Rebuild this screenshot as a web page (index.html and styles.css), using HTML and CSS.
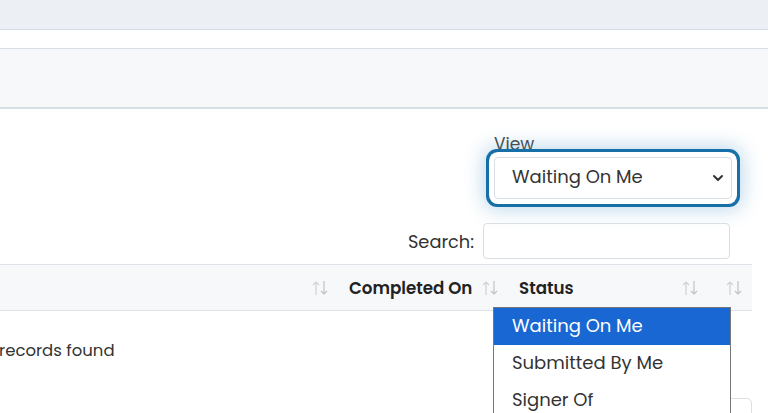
FILE: index.html
```html
<!DOCTYPE html>
<html lang="en">
<head>
<meta charset="utf-8">
<title>Documents</title>
<link rel="stylesheet" href="styles.css">
</head>
<body>
  <header class="topbar"></header>
  <div class="strip"></div>
  <div class="panel"></div>

  <main class="content">
    <div class="view-row">
      <div class="view-field">
        <label class="view-label">View</label>
        <div class="select focused">
          <span class="select-value">Waiting On Me</span>
          <svg class="chevron" width="12" height="8" viewBox="0 0 12 8"><path d="M2 2 L6 6 L10 2" fill="none" stroke="#333" stroke-width="2" stroke-linecap="round" stroke-linejoin="round"/></svg>
        </div>
      </div>
    </div>

    <div class="search-row">
      <label class="search-label">Search:</label>
      <div class="search-input"></div>
    </div>

    <div class="table">
      <div class="thead">
        <div class="th col-a"><span></span><svg class="sort" width="16" height="16" viewBox="0 0 16 16"><path d="M4 2 V15 M1 5 L4 2 L7 5" fill="none" stroke="#cfd2d6" stroke-width="1.2"/><path d="M12 1 V14 M9 11 L12 14 L15 11" fill="none" stroke="#bfc3c8" stroke-width="1.2"/></svg></div>
        <div class="th col-b"><span>Completed On</span><svg class="sort" width="16" height="16" viewBox="0 0 16 16"><path d="M4 2 V15 M1 5 L4 2 L7 5" fill="none" stroke="#cfd2d6" stroke-width="1.2"/><path d="M12 1 V14 M9 11 L12 14 L15 11" fill="none" stroke="#bfc3c8" stroke-width="1.2"/></svg></div>
        <div class="th col-c"><span>Status</span><svg class="sort" width="16" height="16" viewBox="0 0 16 16"><path d="M4 2 V15 M1 5 L4 2 L7 5" fill="none" stroke="#cfd2d6" stroke-width="1.2"/><path d="M12 1 V14 M9 11 L12 14 L15 11" fill="none" stroke="#bfc3c8" stroke-width="1.2"/></svg></div>
        <div class="th col-d"><span></span><svg class="sort" width="16" height="16" viewBox="0 0 16 16"><path d="M4 2 V15 M1 5 L4 2 L7 5" fill="none" stroke="#cfd2d6" stroke-width="1.2"/><path d="M12 1 V14 M9 11 L12 14 L15 11" fill="none" stroke="#bfc3c8" stroke-width="1.2"/></svg></div>
      </div>
      <div class="empty-row">records found</div>
    </div>

    <div class="pager">
      <div class="page-btn"></div>
    </div>

    <ul class="options">
      <li class="option selected">Waiting On Me</li>
      <li class="option">Submitted By Me</li>
      <li class="option">Signer Of</li>
    </ul>
  </main>
</body>
</html>
```
FILE: styles.css
```css
html, body {
  margin: 0;
  padding: 0;
  background: #fff;
  overflow: hidden;
}

body {
  width: 768px;
  height: 413px;
  font-family: "Poppins", "Open Sans", "Noto Sans", sans-serif;
  color: #333;
}

.topbar {
  height: 29px;
  background: #eceff4;
  border-bottom: 1px solid #d8dee6;
}

.strip {
  height: 18px;
  border-bottom: 1px solid #d8dee6;
}

.panel {
  height: 58px;
  background: #f7f8fa;
  border-bottom: 2px solid #d6dfe2;
}

.content {
  position: relative;
  height: 304px;
  overflow: hidden;
  padding-top: 22px;
  box-sizing: border-box;
}

/* view selector */
.view-row {
  display: flex;
  justify-content: flex-end;
  padding-right: 36px;
}

.view-field {
  display: flex;
  flex-direction: column;
  width: 238px;
}

.view-label {
  font-size: 17px;
  line-height: 26px;
  color: #4a4a4a;
}

.select {
  box-sizing: border-box;
  height: 42px;
  border: 1px solid #d8e0e6;
  border-radius: 4px;
  background: #fff;
  display: flex;
  align-items: center;
  justify-content: space-between;
  padding: 0 7px 3px 17px;
}

.select.focused {
  box-shadow: 0 0 0 5px #fff, 0 0 0 8px #176fa8, 0 0 20px 10px rgba(40, 130, 190, 0.32);
}

.chevron {
  margin-top: 3px;
}

.select-value {
  font-size: 18px;
  color: #333;
}

/* search */
.search-row {
  display: flex;
  justify-content: flex-end;
  align-items: center;
  gap: 9px;
  padding-right: 38px;
  margin-top: 24px;
}

.search-label {
  font-size: 17.8px;
  color: #333;
}

.search-input {
  box-sizing: border-box;
  width: 247px;
  height: 36px;
  border: 1px solid #d8e0e6;
  border-radius: 4px;
}

/* table */
.table {
  width: 752px;
  margin-top: 5px;
}

.thead {
  display: flex;
  height: 45px;
  background: #f7f8fa;
  border-top: 1px solid #dde3e8;
  border-bottom: 1px solid #dde3e8;
}

.th {
  box-sizing: border-box;
  display: flex;
  align-items: center;
  justify-content: space-between;
  padding: 0 9px 0 12px;
  font-weight: 600;
  font-size: 16.7px;
  color: #222;
}

.col-a { width: 337px; }
.col-b { width: 170px; }
.col-c { width: 200px; }
.col-d { width: 45px; padding-right: 10px; }

.sort {
  flex: none;
}

.empty-row {
  height: 80px;
  line-height: 80px;
  font-size: 16.5px;
  color: #333;
  margin-left: -1px;
}

.pager {
  display: flex;
  justify-content: flex-end;
  width: 752px;
  margin-top: 7px;
}

.page-btn {
  width: 40px;
  height: 36px;
  border: 1px solid #dcdfe3;
  border-radius: 0 5px 0 0;
}

/* open option list of the view selector */
.options {
  position: absolute;
  left: 493px;
  top: 198px;
  width: 238px;
  margin: 0;
  padding: 0;
  list-style: none;
  background: #fff;
  border: 1px solid #767676;
  box-sizing: border-box;
}

.option {
  height: 37px;
  line-height: 35px;
  padding-left: 18px;
  font-size: 18px;
  color: #333;
}

.option.selected {
  background: #1967d2;
  color: #fff;
}
```
